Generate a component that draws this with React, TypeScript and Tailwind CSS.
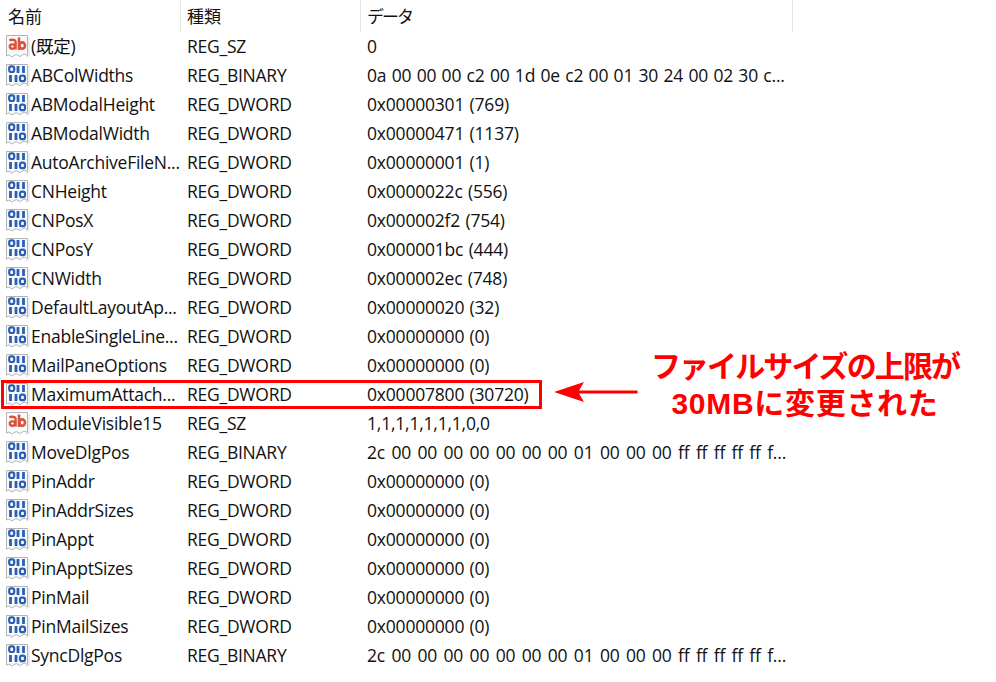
import React from 'react'

type Row = { name: string; type: string; data: string; kind: 'ab' | 'bin' }

const rows: Row[] = [
  { name: '(既定)', type: 'REG_SZ', data: '0', kind: 'ab' },
  { name: 'ABColWidths', type: 'REG_BINARY', data: '0a 00 00 00 c2 00 1d 0e c2 00 01 30 24 00 02 30 c...', kind: 'bin' },
  { name: 'ABModalHeight', type: 'REG_DWORD', data: '0x00000301 (769)', kind: 'bin' },
  { name: 'ABModalWidth', type: 'REG_DWORD', data: '0x00000471 (1137)', kind: 'bin' },
  { name: 'AutoArchiveFileN...', type: 'REG_DWORD', data: '0x00000001 (1)', kind: 'bin' },
  { name: 'CNHeight', type: 'REG_DWORD', data: '0x0000022c (556)', kind: 'bin' },
  { name: 'CNPosX', type: 'REG_DWORD', data: '0x000002f2 (754)', kind: 'bin' },
  { name: 'CNPosY', type: 'REG_DWORD', data: '0x000001bc (444)', kind: 'bin' },
  { name: 'CNWidth', type: 'REG_DWORD', data: '0x000002ec (748)', kind: 'bin' },
  { name: 'DefaultLayoutAp...', type: 'REG_DWORD', data: '0x00000020 (32)', kind: 'bin' },
  { name: 'EnableSingleLine...', type: 'REG_DWORD', data: '0x00000000 (0)', kind: 'bin' },
  { name: 'MailPaneOptions', type: 'REG_DWORD', data: '0x00000000 (0)', kind: 'bin' },
  { name: 'MaximumAttach...', type: 'REG_DWORD', data: '0x00007800 (30720)', kind: 'bin' },
  { name: 'ModuleVisible15', type: 'REG_SZ', data: '1,1,1,1,1,1,1,0,0', kind: 'ab' },
  { name: 'MoveDlgPos', type: 'REG_BINARY', data: '2c 00 00 00 00 00 00 00 01 00 00 00 ff ff ff ff ff f...', kind: 'bin' },
  { name: 'PinAddr', type: 'REG_DWORD', data: '0x00000000 (0)', kind: 'bin' },
  { name: 'PinAddrSizes', type: 'REG_DWORD', data: '0x00000000 (0)', kind: 'bin' },
  { name: 'PinAppt', type: 'REG_DWORD', data: '0x00000000 (0)', kind: 'bin' },
  { name: 'PinApptSizes', type: 'REG_DWORD', data: '0x00000000 (0)', kind: 'bin' },
  { name: 'PinMail', type: 'REG_DWORD', data: '0x00000000 (0)', kind: 'bin' },
  { name: 'PinMailSizes', type: 'REG_DWORD', data: '0x00000000 (0)', kind: 'bin' },
  { name: 'SyncDlgPos', type: 'REG_BINARY', data: '2c 00 00 00 00 00 00 00 01 00 00 00 ff ff ff ff ff f...', kind: 'bin' },
]

// registry value icon: dog-eared sheet with "ab" or 011/110 on it
const RegIcon = ({ kind }: { kind: Row['kind'] }) => (
  <svg width="25" height="25" viewBox="0 0 25 25" className="shrink-0">
    <path d="M1.5 1.5H22.5V21.5L19 20L15 22.5L11 20.5L7 23L4 21L1.5 22Z" fill="#f9fafc" stroke="#b4b4b4" strokeWidth="1" />
    <path d="M21 23.5L24 22V3" fill="none" stroke="#dcdcdc" strokeWidth="1" />
    {kind === 'ab' ? (
      <g fill="none" stroke="#d9533b">
        <path d="M4.4 6.4C6 5.4 10 5.2 10.6 7.6V15.6" strokeWidth="2.4" />
        <ellipse cx="7.4" cy="12.6" rx="2.6" ry="2.2" strokeWidth="2.4" />
        <path d="M14 3.5V16" strokeWidth="2.6" />
        <ellipse cx="17.2" cy="11.6" rx="2.8" ry="3.2" strokeWidth="2.6" />
      </g>
    ) : (
      <g fill="none" stroke="#2c5fb3">
        <rect x="4.2" y="3.4" width="5" height="5.6" rx="2" strokeWidth="2.2" />
        <path d="M13 3V10M18.5 3V10" strokeWidth="2.8" />
        <path d="M5.5 12V19M11 12V19" strokeWidth="2.8" />
        <rect x="15" y="12.6" width="5" height="5.6" rx="2" strokeWidth="2.2" />
      </g>
    )}
  </svg>
)

export default function App() {
  return (
    <div className="relative w-[996px] h-[682px] overflow-hidden bg-white text-[17.5px] text-[#111] font-['Open_Sans','Noto_Sans_CJK_JP',sans-serif]">
      {/* Column headers */}
      <div className="flex h-[32px] text-[17px] font-['Noto_Sans_CJK_JP',sans-serif]">
        <div className="w-[181px] pl-[8px] pt-[3px] border-r border-[#e5e5e5]">名前</div>
        <div className="w-[180px] pl-[6px] pt-[3px] border-r border-[#e5e5e5]">種類</div>
        <div className="w-[432px] pl-[6px] pt-[3px] border-r border-[#e5e5e5] tracking-[-2px]">データ</div>
      </div>

      {/* Value rows */}
      <div className="flex flex-col">
        {rows.map(r => (
          <div key={r.name} className="flex items-center h-[29px] tracking-[-0.25px] whitespace-nowrap">
            <div className="flex items-center w-[181px] pl-[5px] gap-[1px] overflow-hidden">
              <RegIcon kind={r.kind} />
              <span>{r.name}</span>
            </div>
            <div className="w-[180px] pl-[6px]">{r.type}</div>
            <div className={`pl-[6px] tracking-[-0.2px] ${r.data.startsWith('2c') ? '[word-spacing:2.1px]' : '[word-spacing:1px]'}`}>{r.data}</div>
          </div>
        ))}
      </div>

      {/* Highlight around the changed value */}
      <div className="absolute left-[1px] top-[380px] w-[541px] h-[29px] border-[3px] border-[#ff0000]" />

      {/* Arrow to the highlight */}
      <svg className="absolute left-[552px] top-[379px]" width="88" height="26" viewBox="0 0 88 26">
        <path d="M2 13L32 3L27 11.5H85.5V14.5H27L32 23Z" fill="#ff0000" />
      </svg>

      {/* Callout */}
      <div className="absolute left-[630px] top-[348px] w-[350px] text-center text-[30px] leading-[37px] font-bold text-[#ff0000] font-['Liberation_Sans','Noto_Sans_CJK_JP',sans-serif]">
        <div className="tracking-[-1.9px]">ファイルサイズの上限が</div>
        <div className="tracking-[0.7px]">30MBに変更された</div>
      </div>
    </div>
  )
}
